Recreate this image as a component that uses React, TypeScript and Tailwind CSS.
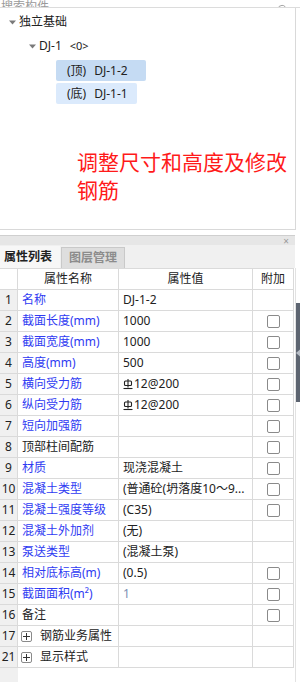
import React from 'react';
import { Search } from 'lucide-react';

type Row = {
  no: string;
  name: string;
  value?: React.ReactNode;
  blue?: boolean;
  check?: boolean;
  group?: boolean;
  valueClass?: string;
};

function RebarMark() {
  return (
    <svg width="10" height="11" viewBox="0 0 10 11" className="mr-[1px] inline-block shrink-0">
      <rect x="1.5" y="2" width="7" height="4.5" rx="1" fill="none" stroke="#222" strokeWidth="1.1" />
      <line x1="5" y1="0" x2="5" y2="8.5" stroke="#222" strokeWidth="1.1" />
      <line x1="0.5" y1="9.5" x2="9.5" y2="9.5" stroke="#222" strokeWidth="1.1" />
    </svg>
  );
}

const rows: Row[] = [
  { no: '1', name: '名称', value: 'DJ-1-2', blue: true },
  { no: '2', name: '截面长度(mm)', value: '1000', blue: true, check: true },
  { no: '3', name: '截面宽度(mm)', value: '1000', blue: true, check: true },
  { no: '4', name: '高度(mm)', value: '500', blue: true, check: true },
  {
    no: '5',
    name: '横向受力筋',
    value: (
      <span className="flex items-center">
        <RebarMark />
        12@200
      </span>
    ),
    blue: true,
    check: true,
  },
  {
    no: '6',
    name: '纵向受力筋',
    value: (
      <span className="flex items-center">
        <RebarMark />
        12@200
      </span>
    ),
    blue: true,
    check: true,
  },
  { no: '7', name: '短向加强筋', blue: true, check: true },
  { no: '8', name: '顶部柱间配筋', check: true },
  { no: '9', name: '材质', value: '现浇混凝土', blue: true, check: true },
  { no: '10', name: '混凝土类型', value: '(普通砼(坍落度10～9...', blue: true, check: true },
  { no: '11', name: '混凝土强度等级', value: '(C35)', blue: true, check: true },
  { no: '12', name: '混凝土外加剂', value: '(无)', blue: true },
  { no: '13', name: '泵送类型', value: '(混凝土泵)', blue: true },
  { no: '14', name: '相对底标高(m)', value: '(0.5)', blue: true, check: true },
  { no: '15', name: '截面面积(m²)', value: '1', blue: true, check: true, valueClass: 'text-[#7b8fb3]' },
  { no: '16', name: '备注', check: true },
  { no: '17', name: '钢筋业务属性', group: true },
  { no: '21', name: '显示样式', group: true },
];

function Checkbox() {
  return <div className="h-[13px] w-[13px] rounded-[2px] border border-[#8a8a8a] bg-white" />;
}

function Expander() {
  return (
    <div className="mr-[8px] flex h-[11px] w-[11px] items-center justify-center rounded-[2px] border border-[#8a8a8a]">
      <span className="relative block h-[7px] w-[7px]">
        <span className="absolute left-0 top-[3px] h-px w-[7px] bg-[#333]" />
        <span className="absolute left-[3px] top-0 h-[7px] w-px bg-[#333]" />
      </span>
    </div>
  );
}

function Caret() {
  return (
    <svg width="7" height="5" viewBox="0 0 7 5" className="shrink-0">
      <path d="M0 0.5 L7 0.5 L3.5 4.5 Z" fill="#7a7a7a" />
    </svg>
  );
}

export default function App() {
  return (
    <div
      className="h-[682px] w-[300px] overflow-hidden bg-white text-[12px] text-[#222]"
      style={{ fontFamily: '"Noto Sans", "Noto Sans CJK SC", sans-serif' }}
    >
      {/* search box, mostly scrolled off */}
      <div className="flex h-[8px] items-end justify-between overflow-hidden border-b border-[#dcdcdc]">
        <span className="mb-[-8px] pl-[1px] leading-[16px] text-[#9a9a9a]">搜索构件...</span>
        <Search className="mb-[-8px] mr-[12px] h-[11px] w-[11px] text-[#999]" />
      </div>

      {/* tree panel */}
      <div className="h-[222px] w-[296px] border-b border-r border-[#d9d9d9] pt-[2px]">
        <div className="flex h-[24px] items-center pl-[9px]">
          <Caret />
          <span className="ml-[3px]">独立基础</span>
        </div>
        <div className="flex h-[24px] items-center pl-[29px]">
          <Caret />
          <span className="ml-[3px]">DJ-1</span>
          <span className="ml-[8px] text-[11px]">&lt;0&gt;</span>
        </div>
        <div className="ml-[56px] mt-[2px] flex h-[21px] w-[90px] items-center rounded-[2px] bg-[#c5dbf3] pl-[11px]">
          <span>(顶)</span>
          <span className="ml-[8px]">DJ-1-2</span>
        </div>
        <div className="ml-[56px] mt-[2px] flex h-[21px] w-[81px] items-center rounded-[2px] bg-[#dbeafc] pl-[11px]">
          <span>(底)</span>
          <span className="ml-[8px]">DJ-1-1</span>
        </div>
        <div className="mt-[44px] pl-[77px] text-[21px] leading-[28px] text-[#ff1a1a]">
          <div className="whitespace-nowrap">调整尺寸和高度及修改</div>
          <div>钢筋</div>
        </div>
      </div>

      {/* property panel */}
      <div className="mt-[5px] flex">
        <div className="flex w-[296px] flex-col">
          <div className="flex h-[10px] w-[295px] items-center justify-end border-t border-[#cfcfcf] bg-[#e6e6e6] pr-[6px]">
            <span className="text-[10px] leading-none text-[#9a9a9a]">×</span>
          </div>
          <div className="flex h-[23px] w-[295px] items-end bg-[#f0f0f0]">
            <div className="flex h-[22px] w-[60px] items-center bg-[#f7f7f7] pl-[4px] font-bold">属性列表</div>
            <div className="ml-[1px] flex h-[21px] w-[64px] items-center justify-center border border-b-0 border-[#c9c9c9] bg-[#dedede] font-bold text-[#8c8c8c]">
              图层管理
            </div>
          </div>

          <div className="flex h-[414px] flex-col border-r border-[#e2e2e2]">
            <div className="w-[294px] border-t border-[#dadada]">
              <div className="grid h-[21px] grid-cols-[18px_101px_134px_41px]">
                <div className="border-b border-r border-[#dadada]" />
                <div className="flex items-center justify-center border-b border-r border-[#dadada]">属性名称</div>
                <div className="flex items-center justify-center border-b border-r border-[#dadada]">属性值</div>
                <div className="flex items-center justify-center border-b border-r border-[#dadada]">附加</div>
              </div>
              {rows.map((r) => (
                <div key={r.no} className="grid h-[21px] grid-cols-[18px_101px_134px_41px]">
                  <div className="flex items-center justify-center border-b border-r border-[#dadada] bg-[#f0f0f0]">
                    {r.no}
                  </div>
                  <div
                    className={
                      'flex items-center overflow-hidden whitespace-nowrap border-b border-r border-[#dadada] ' +
                      (r.group ? 'pl-[3px]' : 'pl-[4px]') +
                      (r.blue ? ' text-[#2f3bf2]' : '')
                    }
                  >
                    {r.group && <Expander />}
                    {r.name}
                  </div>
                  <div
                    className={
                      'flex items-center overflow-hidden whitespace-nowrap border-b border-r border-[#dadada] pl-[4px] ' +
                      (r.valueClass ?? '')
                    }
                  >
                    {r.value}
                  </div>
                  <div className="flex items-center justify-center border-b border-r border-[#dadada]">
                    {r.check && <Checkbox />}
                  </div>
                </div>
              ))}
            </div>
            <div className="flex flex-1">
              <div className="w-[18px] bg-[#f0f0f0]" />
            </div>
          </div>
        </div>

        {/* splitter handle */}
        <div className="w-[4px] pt-[68px]">
          <div className="flex h-[99px] w-[4px] items-center bg-[#5d6571]">
            <svg width="4" height="8" viewBox="0 0 4 8">
              <path d="M0 4 L4 0.5 L4 7.5 Z" fill="#b8bec7" />
            </svg>
          </div>
        </div>
      </div>
    </div>
  );
}
